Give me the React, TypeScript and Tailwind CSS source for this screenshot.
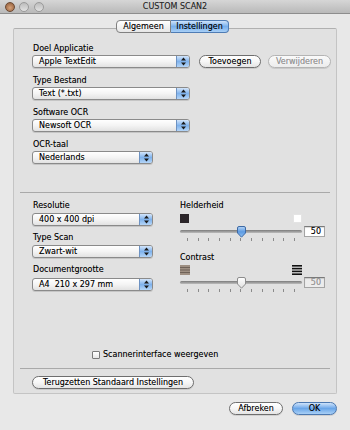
import React from "react";

function Arrows() {
  return (
    <svg width="9" height="11" viewBox="0 0 9 11">
      <path d="M2 4.5 L4.5 1.5 L7 4.5 Z" fill="#1a1a1a" />
      <path d="M2 6.5 L4.5 9.5 L7 6.5 Z" fill="#1a1a1a" />
    </svg>
  );
}

function Popup({ label, className }: { label: string; className: string }) {
  return (
    <div
      className={`${className} h-[13px] flex rounded-[3px] border border-[#8a8a8a] bg-gradient-to-b from-white via-[#f4f4f4] to-[#e2e2e2] shadow-[0_1px_0_rgba(0,0,0,0.12)] overflow-hidden`}
    >
      <span className="flex-1 pl-[6px] text-[8px] leading-[11px] text-black truncate whitespace-pre">{label}</span>
      <span className="w-[13px] border-l border-[#6d92c2] bg-gradient-to-b from-[#d3e5fa] via-[#7fb2ec] to-[#b4d5f7] flex items-center justify-center">
        <Arrows />
      </span>
    </div>
  );
}

function PushButton({
  label,
  className,
  disabled,
  primary,
}: {
  label: string;
  className: string;
  disabled?: boolean;
  primary?: boolean;
}) {
  const skin = primary
    ? "border-[#4c78b0] bg-gradient-to-b from-[#cfe3fa] via-[#6aa6e8] to-[#a9d0f6] text-black"
    : disabled
      ? "border-[#b4b4b4] bg-gradient-to-b from-[#fafafa] to-[#ececec] text-[#9a9a9a]"
      : "border-[#6e6e6e] bg-gradient-to-b from-white via-[#f6f6f6] to-[#e4e4e4] text-black";
  return (
    <div
      className={`${className} ${skin} h-[13px] rounded-full border flex items-center justify-center text-[8px] leading-[11px] shadow-[0_1px_0_rgba(0,0,0,0.1)]`}
    >
      {label}
    </div>
  );
}

function Thumb({ active }: { active: boolean }) {
  return (
    <svg width="11" height="12" viewBox="0 0 11 12">
      <defs>
        <linearGradient id="tb" x1="0" y1="0" x2="0" y2="1">
          <stop offset="0" stopColor="#b7d5f6" />
          <stop offset="0.5" stopColor="#5d9be2" />
          <stop offset="1" stopColor="#8fc0f3" />
        </linearGradient>
        <linearGradient id="tw" x1="0" y1="0" x2="0" y2="1">
          <stop offset="0" stopColor="#ffffff" />
          <stop offset="1" stopColor="#e0e0e0" />
        </linearGradient>
      </defs>
      <path
        d="M1.5 2 Q1.5 0.5 3 0.5 H8 Q9.5 0.5 9.5 2 V7 L5.5 11.2 L1.5 7 Z"
        fill={active ? "url(#tb)" : "url(#tw)"}
        stroke={active ? "#3e6aa5" : "#8c8c8c"}
        strokeWidth="1"
      />
    </svg>
  );
}

function Slider({ active, value }: { active: boolean; value: string }) {
  return (
    <div>
      <div className="flex items-center gap-[2px] h-[12px]">
        <div className="relative w-[122px] h-[12px] flex items-center">
          <div className="w-full h-[3px] rounded-full bg-gradient-to-b from-[#7b7b7b] to-[#bdbdbd]" />
          <div className="absolute left-[56px] top-[1px]">
            <Thumb active={active} />
          </div>
        </div>
        <div
          className={`w-[21px] h-[11px] border border-[#a4a4a4] border-t-[#7a7a7a] shadow-[inset_0_1px_1px_rgba(0,0,0,0.15)] text-right pr-[3px] text-[8px] leading-[9px] ${
            active ? "bg-white text-black" : "bg-[#ececec] text-[#9c9c9c]"
          }`}
        >
          {value}
        </div>
      </div>
      <div className="w-[122px] px-[7px] mt-[1px] h-[3px] flex justify-between">
        {Array.from({ length: 11 }).map((_, i) => (
          <div key={i} className="w-px h-[3px] bg-[#8a8a8a]" />
        ))}
      </div>
    </div>
  );
}

function LowContrast() {
  return (
    <svg width="10" height="10" viewBox="0 0 10 10">
      <rect x="0" y="0" width="10" height="10" fill="#9e8f82" />
      <rect x="0" y="2" width="10" height="1" fill="#6f6258" />
      <rect x="0" y="4.5" width="10" height="1" fill="#6f6258" />
      <rect x="0" y="7" width="10" height="1" fill="#6f6258" />
    </svg>
  );
}

function HighContrast() {
  return (
    <svg width="10" height="10" viewBox="0 0 10 10">
      <rect x="0" y="0" width="10" height="1.6" fill="#111" />
      <rect x="0" y="2.8" width="10" height="1.6" fill="#111" />
      <rect x="0" y="5.6" width="10" height="1.6" fill="#111" />
      <rect x="0" y="8.4" width="10" height="1.6" fill="#111" />
    </svg>
  );
}

function Label({ text, className = "" }: { text: string; className?: string }) {
  return <div className={`h-[11px] text-[8px] leading-[11px] text-black ${className}`}>{text}</div>;
}

export default function App() {
  return (
    <div className="w-[350px] h-[430px] bg-[#e8e8e8] font-['DejaVu_Sans',sans-serif] text-black overflow-hidden [text-shadow:0_0_0.5px_rgba(0,0,0,0.35)]">
      {/* Title bar */}
      <div className="h-[14px] bg-gradient-to-b from-[#d6d6d6] to-[#b9b9b9] border-b border-[#8d8d8d] flex items-center relative">
        <div className="flex items-center gap-[3px] pl-[5px]">
          <div className="w-[10px] h-[10px] rounded-full border border-[#6b4a34] bg-[radial-gradient(circle_at_50%_60%,#d8a37a,#8a5634)]" />
          <div className="w-[10px] h-[10px] rounded-full border border-[#9a9a9a] bg-gradient-to-b from-[#bcbcbc] to-[#e2e2e2] ml-[1px]" />
          <div className="w-[10px] h-[10px] rounded-full border border-[#9a9a9a] bg-gradient-to-b from-[#bcbcbc] to-[#e2e2e2] ml-[2px]" />
        </div>
        <div className="absolute inset-0 flex items-center justify-center text-[8px] leading-[11px] text-[#2a2a2a]">
          CUSTOM SCAN2
        </div>
      </div>

      {/* Tabs */}
      <div className="pt-[6px] pl-[116px] flex relative z-10">
        <div className="w-[55px] h-[13px] rounded-l-[4px] border border-[#808080] bg-gradient-to-b from-white to-[#e6e6e6] flex items-center justify-center text-[8px] leading-[11px]">
          Algemeen
        </div>
        <div className="w-[58px] h-[13px] rounded-r-[4px] border border-l-0 border-[#4f7cb4] bg-gradient-to-b from-[#cfe3fa] via-[#77afec] to-[#a8cff6] flex items-center justify-center text-[8px] leading-[11px]">
          Instellingen
        </div>
      </div>

      {/* Panel */}
      <div className="mx-[13px] mt-[-5px] h-[366px] border border-[#c4c4c4] border-t-[#b0b0b0] bg-[#e1e1e1] rounded-[2px] pl-[18px] pt-[14px]">
        <div className="flex flex-col">
          <Label text="Doel Applicatie" className="pl-[1px]" />
          <div className="flex items-center mt-[1px]">
            <Popup label="Apple TextEdit" className="w-[158px]" />
            <PushButton label="Toevoegen" className="w-[62px] ml-[9px]" />
            <PushButton label="Verwijderen" className="w-[63px] ml-[7px]" disabled />
          </div>
          <Label text="Type Bestand" className="pl-[1px] mt-[7px]" />
          <Popup label="Text (*.txt)" className="w-[158px] mt-[1px]" />
          <Label text="Software OCR" className="pl-[1px] mt-[7px]" />
          <Popup label="Newsoft OCR" className="w-[158px] mt-[1px]" />
          <Label text="OCR-taal" className="pl-[1px] mt-[7px]" />
          <Popup label="Nederlands" className="w-[121px] mt-[1px]" />
        </div>

        <div className="ml-[-12px] w-[310px] h-px bg-[#a9a9a9] mt-[28px]" />

        <div className="flex mt-[7px]">
          <div className="w-[121px] flex flex-col">
            <Label text="Resolutie" className="pl-[1px]" />
            <Popup label="400 x 400 dpi" className="w-[121px] mt-[2px]" />
            <Label text="Type Scan" className="pl-[1px] mt-[6px]" />
            <Popup label="Zwart-wit" className="w-[121px] mt-[2px]" />
            <Label text="Documentgrootte" className="pl-[1px] mt-[6px]" />
            <Popup label="A4  210 x 297 mm" className="w-[121px] mt-[3px]" />
          </div>
          <div className="ml-[27px] flex flex-col">
            <Label text="Helderheid" />
            <div className="w-[122px] flex justify-between mt-[3px]">
              <div className="w-[9px] h-[9px] bg-[#2b2529]" />
              <div className="w-[9px] h-[9px] bg-white border border-[#e4e4e4]" />
            </div>
            <div className="mt-[2px]">
              <Slider active value="50" />
            </div>
            <Label text="Contrast" className="mt-[11px]" />
            <div className="w-[122px] flex justify-between mt-[2px]">
              <LowContrast />
              <HighContrast />
            </div>
            <div className="mt-[1px]">
              <Slider active={false} value="50" />
            </div>
          </div>
        </div>

        <div className="flex items-center mt-[57px] ml-[60px] h-[11px]">
          <div className="w-[8px] h-[8px] border border-[#7a7a7a] rounded-[1px] bg-gradient-to-b from-white to-[#e6e6e6]" />
          <span className="ml-[3px] text-[8px] leading-[11px]">Scannerinterface weergeven</span>
        </div>

        <div className="ml-[-12px] w-[310px] h-px bg-[#a9a9a9] mt-[8px]" />

        <PushButton label="Terugzetten Standaard Instellingen" className="w-[162px] mt-[7px] ml-[0px]" />
      </div>

      {/* Bottom buttons */}
      <div className="flex justify-end pr-[13px] mt-[8px]">
        <PushButton label="Afbreken" className="w-[54px]" />
        <PushButton label="OK" className="w-[45px] ml-[9px]" primary />
      </div>
    </div>
  );
}
